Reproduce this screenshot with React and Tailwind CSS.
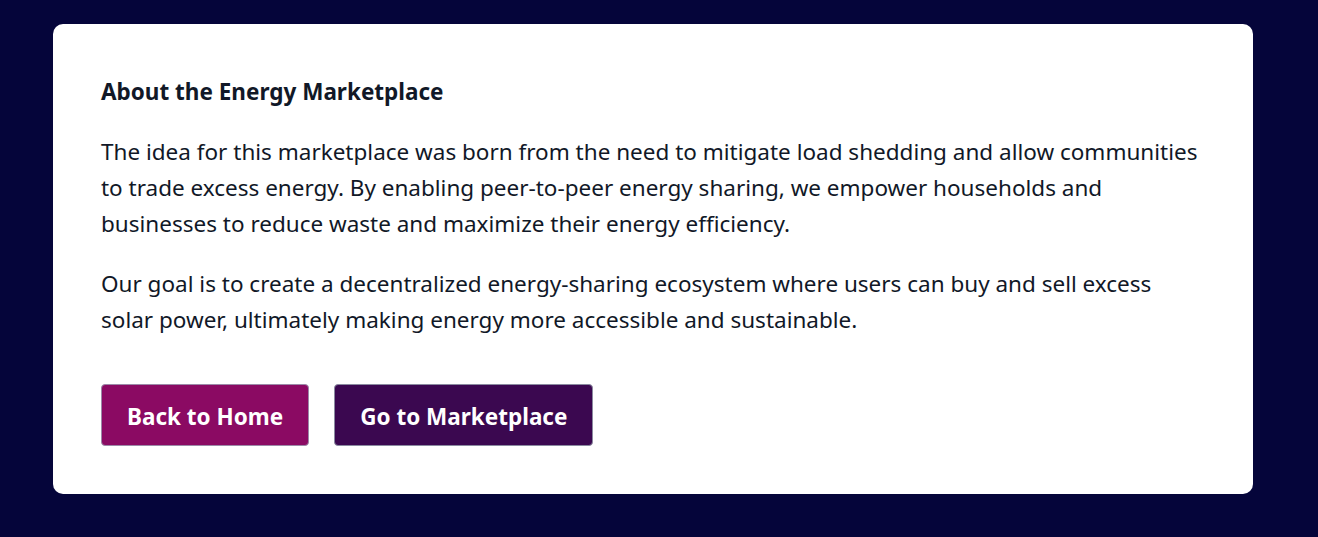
import React from 'react';

export default function App() {
  return (
    <div className="min-h-[537px] bg-[#05053a] pt-[24px] px-[53px] font-['Noto_Sans',sans-serif]">
      <section className="w-[1200px] bg-white rounded-[10px] px-[48px] py-[48px] text-[#111827]">
        <h2 className="text-[22.5px] font-bold leading-[40px] mb-[22px]">About the Energy Marketplace</h2>
        <p className="text-[22.5px] leading-[36px] mb-[24px]">
          The idea for this marketplace was born from the need to mitigate load shedding and allow communities
          <br />
          to trade excess energy. By enabling peer-to-peer energy sharing, we empower households and
          <br />
          businesses to reduce waste and maximize their energy efficiency.
        </p>
        <p className="text-[22.5px] leading-[36px]">
          Our goal is to create a decentralized energy-sharing ecosystem where users can buy and sell excess
          <br />
          solar power, ultimately making energy more accessible and sustainable.
        </p>
        <div className="flex gap-[25px] mt-[46px]">
          <button className="h-[62px] px-[25px] pt-[3px] rounded-[4px] border border-[#9c8aa8] bg-[#8b0a63] text-white text-[22.5px] font-bold">
            Back to Home
          </button>
          <button className="h-[62px] px-[25px] pt-[3px] rounded-[4px] border border-[#8a8aa0] bg-[#3b0850] text-white text-[22.5px] font-bold">
            Go to Marketplace
          </button>
        </div>
      </section>
    </div>
  );
}
